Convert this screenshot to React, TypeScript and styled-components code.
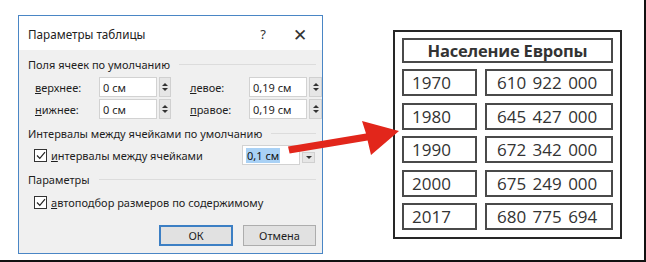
import React from 'react'
import styled, { createGlobalStyle } from 'styled-components'

const GlobalStyle = createGlobalStyle`
  html, body {
    margin: 0;
    padding: 0;
    background: #ffffff;
  }
  body {
    font-family: 'Noto Sans', 'Open Sans', sans-serif;
  }
`

const Frame = styled.div`
  position: relative;
  box-sizing: border-box;
  width: 646px;
  height: 262px;
  display: flex;
  align-items: flex-start;
  padding: 15px 0 0 18px;
  border-right: 2px solid #111;
  border-bottom: 2px solid #111;
  background: #ffffff;
  overflow: hidden;
`

const Dialog = styled.div`
  box-sizing: border-box;
  width: 305px;
  height: 239px;
  display: flex;
  flex-direction: column;
  border: 1px solid #4a86c5;
  background: #f0f0f0;
  font-size: 11px;
  color: #1e1e1e;
`

const TitleBar = styled.div`
  height: 32px;
  display: flex;
  align-items: center;
  padding: 2px 0 0 9px;
  background: #ffffff;
  font-size: 11.7px;
  color: #222;
`

const TitleText = styled.div`
  flex: 1;
`

const TitleButton = styled.div<{ $w: number }>`
  width: ${(p) => p.$w}px;
  text-align: center;
  font-size: ${(p) => (p.$w > 30 ? 17 : 13)}px;
  color: #333;
`

const Body = styled.div`
  flex: 1;
  display: flex;
  flex-direction: column;
  padding: 0 6px 0 9px;
`

const GroupLabel = styled.div<{ $mt: number }>`
  display: flex;
  align-items: center;
  gap: 9px;
  height: 16px;
  margin-top: ${(p) => p.$mt}px;
  white-space: nowrap;
  &::after {
    content: '';
    flex: 1;
    height: 1px;
    background: #dcdcdc;
  }
`

const FieldGrid = styled.div`
  display: grid;
  grid-template-columns: 62px 58px 12px 15px 57px 58px 13px;
  grid-auto-rows: 20px;
  column-gap: 2px;
  row-gap: 2px;
  margin-top: 5px;
  padding-left: 7px;
  align-items: center;
`

const Label = styled.span`
  white-space: nowrap;
`

const Key = styled.span`
  text-decoration: underline;
`

const Input = styled.div<{ $w?: number }>`
  box-sizing: border-box;
  height: 20px;
  width: ${(p) => (p.$w ? `${p.$w}px` : 'auto')};
  display: flex;
  align-items: center;
  padding-left: 3px;
  background: #ffffff;
  border: 1px solid #d2d2d2;
  white-space: nowrap;
`

const Spinner = styled.div`
  box-sizing: border-box;
  height: 20px;
  display: flex;
  flex-direction: column;
  align-items: center;
  justify-content: center;
  gap: 2px;
  background: #e6e6e6;
  border: 1px solid #d0d0d0;
  &::before,
  &::after {
    content: '';
    border-left: 3px solid transparent;
    border-right: 3px solid transparent;
  }
  &::before {
    border-bottom: 3px solid #333;
  }
  &::after {
    border-top: 3px solid #333;
  }
`

const CheckRow = styled.div<{ $mt: number }>`
  display: flex;
  align-items: center;
  height: 20px;
  margin-top: ${(p) => p.$mt}px;
  padding-left: 6px;
`

const Box = styled.div`
  box-sizing: border-box;
  width: 13px;
  height: 13px;
  margin-right: 4px;
  background: #ffffff;
  border: 1px solid #333;
  display: flex;
  align-items: center;
  justify-content: center;
`

const SpacingInput = styled(Input)`
  margin-left: auto;
`

const Selected = styled.span`
  background: #a9d1f5;
  color: #111;
  padding: 0 1px;
`

const DropArrow = styled.div`
  box-sizing: border-box;
  width: 13px;
  height: 11px;
  margin-left: 2px;
  margin-right: 1px;
  margin-top: 5px;
  background: #e6e6e6;
  border: 1px solid #d0d0d0;
  display: flex;
  align-items: center;
  justify-content: center;
  &::after {
    content: '';
    border-left: 3px solid transparent;
    border-right: 3px solid transparent;
    border-top: 3px solid #333;
  }
`

const ButtonRow = styled.div`
  display: flex;
  justify-content: flex-end;
  gap: 10px;
  margin-top: 13px;
`

const Button = styled.div<{ $primary?: boolean }>`
  box-sizing: border-box;
  width: ${(p) => (p.$primary ? 74 : 73)}px;
  height: 21px;
  display: flex;
  align-items: center;
  justify-content: center;
  background: #e1e1e1;
  border: ${(p) => (p.$primary ? '2px solid #3c7fc4' : '1px solid #adadad')};
`

const Table = styled.div`
  box-sizing: border-box;
  width: 229px;
  height: 209px;
  margin: 15px 0 0 70px;
  padding: 6px 7px;
  border: 2px solid #262626;
  display: grid;
  grid-template-columns: 75px 128px;
  grid-template-rows: 25px repeat(5, 27px);
  column-gap: 8px;
  row-gap: 6.4px;
  font-family: 'Open Sans', 'Noto Sans', sans-serif;
  color: #333;
`

const Cell = styled.div<{ $head?: boolean; $pad?: number }>`
  box-sizing: border-box;
  border: 2px solid #4a4a4a;
  display: flex;
  align-items: center;
  justify-content: ${(p) => (p.$head ? 'center' : 'flex-start')};
  padding-left: ${(p) => p.$pad ?? 0}px;
  grid-column: ${(p) => (p.$head ? '1 / 3' : 'auto')};
  font-size: ${(p) => (p.$head ? 16.5 : 17)}px;
  font-weight: ${(p) => (p.$head ? 700 : 400)};
  letter-spacing: ${(p) => (p.$head ? '-0.2px' : '0')};
  word-spacing: ${(p) => (p.$head ? '0' : '2px')};
  white-space: nowrap;
`

const Overlay = styled.svg`
  position: absolute;
  left: 0;
  top: 0;
  pointer-events: none;
`

const rows = [
  ['1970', '610 922 000'],
  ['1980', '645 427 000'],
  ['1990', '672 342 000'],
  ['2000', '675 249 000'],
  ['2017', '680 775 694'],
]

const Check = () => (
  <Box>
    <svg width="10" height="9" viewBox="0 0 10 9">
      <path d="M1 4.5 L3.8 7.3 L9 1.2" fill="none" stroke="#222" strokeWidth="1.2" />
    </svg>
  </Box>
)

export default function App() {
  return (
    <Frame>
      <GlobalStyle />
      <Dialog>
        <TitleBar>
          <TitleText>Параметры таблицы</TitleText>
          <TitleButton $w={30}>?</TitleButton>
          <TitleButton $w={44}>✕</TitleButton>
        </TitleBar>
        <Body>
          <GroupLabel $mt={6}>Поля ячеек по умолчанию</GroupLabel>
          <FieldGrid>
            <Label>
              <Key>в</Key>ерхнее:
            </Label>
            <Input>0 см</Input>
            <Spinner />
            <span />
            <Label>
              <Key>л</Key>евое:
            </Label>
            <Input>0,19 см</Input>
            <Spinner />
            <Label>
              <Key>н</Key>ижнее:
            </Label>
            <Input>0 см</Input>
            <Spinner />
            <span />
            <Label>
              <Key>п</Key>равое:
            </Label>
            <Input>0,19 см</Input>
            <Spinner />
          </FieldGrid>
          <GroupLabel $mt={6}>Интервалы между ячейками по умолчанию</GroupLabel>
          <CheckRow $mt={4}>
            <Check />
            <Label>
              <Key>и</Key>нтервалы между ячейками
            </Label>
            <SpacingInput $w={58}>
              <Selected>0,1 см</Selected>
            </SpacingInput>
            <DropArrow />
          </CheckRow>
          <GroupLabel $mt={6}>Параметры</GroupLabel>
          <CheckRow $mt={5}>
            <Check />
            <Label>
              <Key>а</Key>втоподбор размеров по содержимому
            </Label>
          </CheckRow>
          <ButtonRow>
            <Button $primary>ОК</Button>
            <Button>Отмена</Button>
          </ButtonRow>
        </Body>
      </Dialog>
      <Table>
        <Cell $head>Население Европы</Cell>
        {rows.map(([year, value]) => (
          <React.Fragment key={year}>
            <Cell $pad={8}>{year}</Cell>
            <Cell $pad={10}>{value}</Cell>
          </React.Fragment>
        ))}
      </Table>
      <Overlay width="646" height="262" viewBox="0 0 646 262">
        <polygon
          points="288,146.5 366,133.6 362,121 399,131 371,155 367.6,140.6 289.6,153.5"
          fill="#e2261b"
        />
      </Overlay>
    </Frame>
  )
}
